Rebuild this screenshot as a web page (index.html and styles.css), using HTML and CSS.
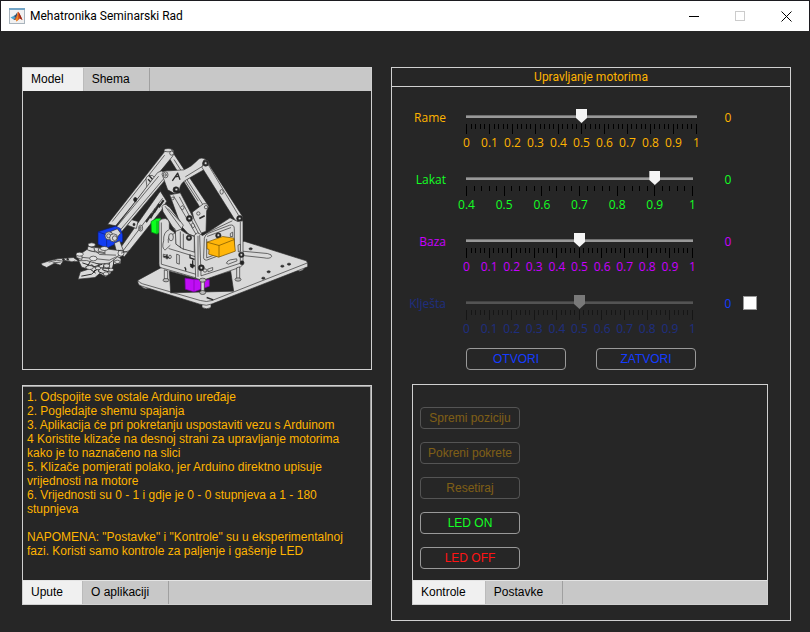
FILE: index.html
```html
<!DOCTYPE html>
<html lang="hr">
<head>
<meta charset="utf-8">
<title>Mehatronika Seminarski Rad</title>
<link rel="stylesheet" href="styles.css">
</head>
<body>
<header class="titlebar">
  <svg class="app-icon" viewBox="0 0 16 16" aria-hidden="true">
    <rect x=".5" y=".5" width="15" height="15" fill="#f1f1f1" stroke="#a9b4bd"/>
    <path d="M0 0H16V2H0Z" fill="#73a5c7"/>
    <path d="M1.5 9.5 4.5 8 6.5 9.5 4.5 11.5Z" fill="#4aa5cf"/>
    <path d="M4.5 8Q7 7 8.5 4L7.5 10 5.5 12 4.5 11.5 6.5 9.5Z" fill="#31506d"/>
    <path d="M9 3.5Q10.500 5 13.500 12L11 10.500 7.500 13.500Q7 11 5.500 12 8 9 9 3.500Z" fill="#d9541e"/>
    <path d="M9 3.500Q9.500 7 8.500 12L7.500 13.500 7 11.500Q9 8 9 3.500Z" fill="#f4a12a"/>
    <path d="M9.500 4Q11 6 13.500 12L11 10.500Z" fill="#932519"/>
  </svg>
  <h1 class="title">Mehatronika Seminarski Rad</h1>
  <button class="win-btn" aria-label="Smanji"><svg viewBox="0 0 11 11"><path d="M0 5.5H10"/></svg></button>
  <button class="win-btn win-off" aria-label="Povećaj" disabled><svg viewBox="0 0 11 11"><path d="M.5 .5H9.500V9.500H.5Z"/></svg></button>
  <button class="win-btn" aria-label="Zatvori"><svg viewBox="0 0 11 11"><path class="smooth" d="M.5 .5 10.500 10.500M10.500 .5 .5 10.500"/></svg></button>
</header>

<main class="workspace">
  <div class="left">
    <section class="panel model">
      <div class="tabs" role="tablist">
        <button class="tab active" role="tab" aria-selected="true">Model</button>
        <button class="tab" role="tab">Shema</button>
      </div>
      <svg class="robot" viewBox="-321 -144 1044 831" role="img" aria-label="Robotska ruka">
        <g stroke="#2c2c2c" stroke-width="2" stroke-linejoin="round" fill="#d9d9d9">
          <!-- base plate and feet -->
          <path d="M34 432V442Q45 452 60 446V436ZM216 490V504Q230 512 243 504V488ZM502 385V394Q514 398 523 388V380Z"/>
          <path d="M24 422 90 386 342 305 529 364Q535 369 533 382L247 493Q230 501 209 494L29 438Q21 431 24 422Z"/>
          <path d="M25 424Q28 430 38 433L211 483Q230 489 246 483L533 370" fill="none"/>
          <path d="M326 334 412 342Q427 345 425 351 420 359 402 355L320 346Z"/>
          <g fill="#333"><ellipse cx="362" cy="328" rx="5" ry="3"/><ellipse cx="416" cy="397" rx="5" ry="3"/><ellipse cx="457" cy="380" rx="5" ry="3"/><ellipse cx="477" cy="374" rx="5" ry="3"/><ellipse cx="400" cy="416" rx="5" ry="3"/></g>
          <path d="M118 395 208 420 302 395 311 455 122 460Z" fill="#242424"/>
          <path d="M165 416 193 420 238 421V440L192 457 166 449Z" fill="#bf0df5" stroke="#8200b0"/>
          <path d="M192 420V457" fill="none" stroke="#8200b0"/>
          <path d="M230 474 250 481" stroke-width="4"/>

          <!-- rear arm -->
          <path d="M104 34Q111 24 123 28 134 33 132 44L232 194Q237 201 232 209L217 215Z"/>
          <path d="M132 60 219 196M151 102 205 185" fill="none"/>
          <ellipse cx="172" cy="112" rx="5" ry="7"/>
          <path d="M187 218 220 193Q232 190 236 201L230 214 228 275 202 286Z"/>
          <circle cx="228" cy="203" r="5"/><circle cx="205" cy="222" r="5"/>
          <path d="M208 237 224 229" stroke-width="5"/>

          <!-- upper forearm link -->
          <path d="M108 31Q118 23 130 34 135 42 128 50L-43 259-67 254Z"/>
          <path d="M104 47-53 246M120 62 35 165" fill="none"/>
          <circle cx="125" cy="41" r="6"/><ellipse cx="114" cy="32" rx="12" ry="5"/>
          <path d="M48 119Q50 105 67 108L84 121 73 156 51 144Z"/>
          <path d="M54 119 79 143M57 108 76 129M69 144 98 182M78 137 109 173M86 123 69 182M100 120 82 171" fill="none" stroke-width="4"/>
          <ellipse cx="16" cy="180" rx="5" ry="6" fill="#222"/>

          <!-- lower forearm link -->
          <path d="M91 155 110 185 94 213-17 352-37 337Z"/>
          <path d="M98 176-24 338M83 207 49 243" fill="none"/>
          <path d="M48 248 66 222M61 236 77 208M72 220 88 193M86 204 101 182" stroke-width="6" fill="none"/>
          <ellipse cx="32" cy="266" rx="6" ry="9"/><ellipse cx="31" cy="266" rx="2" ry="5"/>
          <path d="M3 240 24 246 19 267-8 257Z"/><ellipse cx="12" cy="255" rx="3" ry="4" fill="#222"/>

          <!-- main forearm plate -->
          <path d="M83 99Q94 90 106 99 115 110 105 122L-42 297Q-57 299-56 281Z"/>
          <path d="M86 110-50 274M100 119-43 288" fill="none"/>
          <ellipse cx="16" cy="181" rx="4" ry="6" fill="#222"/>

          <!-- green motor -->
          <path d="M63 246 79 237 92 236V277L81 284 64 278Z" fill="#0aff1e" stroke="#067713"/>
          <path d="M81 244V283" fill="none" stroke="#067713"/>

          <!-- elbow bracket -->
          <path d="M96 104Q99 92 115 94L162 91Q185 82 207 58 219 51 233 65 240 76 230 86L169 121Q150 131 148 153L135 163 113 151Z"/>
          <path d="M127 124 143 101 150 121M136 112 147 110" fill="none" stroke-width="4"/>
          <path d="M166 112 218 80" fill="none"/>
          <ellipse cx="107" cy="106" rx="7" ry="9"/><ellipse cx="107" cy="106" rx="2" ry="4"/>
          <circle cx="138" cy="151" r="9" fill="#222"/><circle cx="139" cy="150" r="4"/>

          <!-- right rear rod -->
          <path d="M222 61Q238 60 238 77L337 230Q342 240 329 246 318 249 311 235L216 84Z"/>
          <path d="M233 73 326 228" fill="none"/>
          <circle cx="227" cy="71" r="9" fill="#292929"/><circle cx="227" cy="71" r="4"/>
          <ellipse cx="275" cy="157" rx="5" ry="7"/><circle cx="329" cy="237" r="9" fill="#222"/><circle cx="329" cy="237" r="4"/>

          <!-- main lifting arm -->
          <path d="M119 166 151 160 215 283 194 304 153 259Z"/>
          <path d="M130 168 199 286M148 172 208 286" fill="none"/>
          <path d="M151 204 157 198 163 205 157 212ZM183 255 189 250 195 260 188 266Z"/>
          <circle cx="178" cy="237" r="9" fill="#222"/><circle cx="178" cy="237" r="4"/>
          <circle cx="128" cy="177" r="4"/>
          <path d="M96 201Q103 187 119 203L160 257 151 276 136 275 99 217Z"/>
          <path d="M105 200 155 268M114 207 151 247" fill="none"/>
          <path d="M112 196 129 205" stroke-width="6"/>

          <!-- front box plates -->
          <path d="M87 246Q92 236 106 237 118 240 118 251V268L138 282V314L158 327 201 337V416L91 384Q86 379 87 370Z"/>
          <path d="M136 276 151 270 166 280 193 290 201 300V340L158 328 138 314Z"/>
          <path d="M94 249V374L200 405M116 327 201 353M118 270Q99 278 101 304 94 325 105 332L121 317M121 263Q142 263 134 282 111 286 115 310" fill="none"/>
          <ellipse cx="123" cy="293" rx="7" ry="11"/><path d="M140 344 148 347V374L140 371ZM100 344 109 347V356L100 353Z"/>
          <path d="M101 350 120 356M111 344V359M180 345V355L194 360M188 362V386M180 374 195 380" stroke-width="4" fill="none"/>
          <ellipse cx="120" cy="352" rx="4" ry="5"/><path d="M164 383 168 390M167 387V394" stroke-width="4"/>
          <path d="M151 276V326M160 283V330M167 281 193 291V338" fill="none"/>
          <circle cx="177" cy="295" r="8" fill="#222"/><circle cx="177" cy="295" r="4"/>
          <path d="M193 287 203 280 218 288 300 235 323 246 339 244V366Q340 378 331 383L217 423 197 416Z"/>
          <path d="M204 289V412M209 287 213 409 335 370M216 287 307 244M331 247V367" fill="none"/>
          <path d="M223 296Q225 285 236 281L299 257Q313 254 313 268V331L230 362Q219 362 221 350Z"/>
          <path d="M230 298V355L306 327M231 291 303 264" fill="none"/>
          <path d="M301 291V282L308 278V291ZM324 317 331 314V334L325 337ZM289 371Q292 363 301 361L320 358 321 364 295 374ZM233 389 248 384V392L234 397Z"/>
          <circle cx="265" cy="288" r="8" fill="#222"/><circle cx="265" cy="287" r="4"/>
          <g fill="#222"><circle cx="214" cy="385" r="9"/><circle cx="334" cy="346" r="8"/><circle cx="336" cy="370" r="6"/><circle cx="186" cy="379" r="5"/></g>
          <g><circle cx="214" cy="385" r="4"/><circle cx="334" cy="346" r="4"/><circle cx="225" cy="393" r="5"/></g>

          <!-- orange motor -->
          <path d="M231 308 278 291 312 296 316 335 266 353 236 344 237 330 231 328Z" fill="#ffb60a" stroke="#6d4b00"/>
          <path d="M231 308 267 318 313 300M267 318V353" fill="none" stroke="#6d4b00"/>
          <!-- standoffs -->
          <path d="M103 391V420H113V394ZM213 423V457H223V421ZM320 385V419H329V382Z"/>
          <g fill="#bbb"><ellipse cx="108" cy="422" rx="9" ry="5"/><ellipse cx="218" cy="459" rx="9" ry="6"/><ellipse cx="324" cy="420" rx="9" ry="5"/><ellipse cx="218" cy="422" rx="10" ry="6"/></g>

          <!-- blue motor and wrist -->
          <path d="M-96 277-73 269-43 260-29 267-22 286V307L-47 315-70 326-96 314Z" fill="#123df2" stroke="#0a1d77"/>
          <path d="M-96 277-70 286-43 275M-70 286V324" fill="none" stroke="#0a1d77"/>
          <path d="M-58 276-38 268-28 281-44 300Z"/>
          <circle cx="-63" cy="289" r="12"/><circle cx="-64" cy="289" r="6"/><circle cx="-49" cy="295" r="12"/><circle cx="-46" cy="296" r="7"/>
          <path d="M-47 311-31 304-20 333-39 343Z"/>
          <path d="M-159 351-118 322-27 334-23 348-62 378-151 364Z"/>
          <path d="M-158 352-62 362-26 345M-118 322-91 345-42 347M-124 333-73 343" fill="none"/>
          <path d="M-126 320-107 326V337L-128 331ZM-93 325-75 331V340L-96 335ZM-161 345-144 350V360L-161 354Z"/>
          <g fill="#e4e4e4"><ellipse cx="-115" cy="316" rx="11" ry="6"/><ellipse cx="-77" cy="327" rx="12" ry="6"/><ellipse cx="-151" cy="344" rx="11" ry="6"/><ellipse cx="-110" cy="357" rx="11" ry="7"/><circle cx="-27" cy="341" r="9"/></g>
          <path d="M-36 332-8 338-2 344-14 355M-27 341 0 333" fill="none"/>

          <!-- gripper jaws -->
          <path d="M-267 372-239 363-218 358-170 354-153 366-177 367-199 363-209 377-226 371-250 384-263 378Z"/>
          <path d="M-244 368-220 362-201 365M-232 370-208 368M-201 355-194 364-179 365M-166 363-175 373" fill="none"/>
          <path d="M-203 359-197 362M-190 357-184 361" stroke-width="6"/>
          <path d="M-154 364-130 363-94 374-62 371-37 352-27 358-28 372-50 376-58 401-73 412-91 402-105 414-156 419-149 397-124 389-145 383Z"/>
          <path d="M-146 410-115 404-99 389-114 376-134 383M-119 366-129 382-103 401M-93 374-94 397-75 404M-77 372-82 391-61 398M-62 369-63 387M-48 360-50 378-33 370M-143 370-108 382-83 374M-108 394-88 385-61 387" fill="none" stroke-width="3"/>
          <g><ellipse cx="-121" cy="384" rx="11" ry="6"/><ellipse cx="-96" cy="386" rx="8" ry="5"/><ellipse cx="-70" cy="379" rx="9" ry="6"/><ellipse cx="-72" cy="403" rx="8" ry="6"/><ellipse cx="-57" cy="391" rx="8" ry="5"/><ellipse cx="-38" cy="367" rx="8" ry="5"/></g>
        </g>
      </svg>
    </section>

    <section class="panel notes">
      <textarea class="instructions" aria-label="Upute" readonly>1. Odspojite sve ostale Arduino uređaje
2. Pogledajte shemu spajanja
3. Aplikacija će pri pokretanju uspostaviti vezu s Arduinom
4 Koristite klizaće na desnoj strani za upravljanje motorima kako je to naznačeno na slici
5. Klizače pomjerati polako, jer Arduino direktno upisuje vrijednosti na motore
6. Vrijednosti su 0 - 1 i gdje je 0 - 0 stupnjeva a 1 - 180 stupnjeva

NAPOMENA: "Postavke" i "Kontrole" su u eksperimentalnoj fazi. Koristi samo kontrole za paljenje i gašenje LED</textarea>
      <div class="tabs tabs-bottom" role="tablist">
        <button class="tab active" role="tab" aria-selected="true">Upute</button>
        <button class="tab" role="tab">O aplikaciji</button>
      </div>
    </section>
  </div>

  <section class="panel motors">
    <h2 class="group-title">Upravljanje motorima</h2>
    <div class="motor amber">
      <label for="rame">Rame</label>
      <div class="slider">
        <input id="rame" type="range" min="0" max="1" step="0.01" value="0.5">
      </div>
      <output for="rame">0</output>
    </div>
    <div class="motor green short">
      <label for="lakat">Lakat</label>
      <div class="slider">
        <input id="lakat" type="range" min="0.4" max="1" step="0.01" value="0.9">
      </div>
      <output for="lakat">0</output>
    </div>
    <div class="motor violet short">
      <label for="baza">Baza</label>
      <div class="slider">
        <input id="baza" type="range" min="0" max="1" step="0.01" value="0.5">
      </div>
      <output for="baza">0</output>
    </div>
    <div class="motor blue short off">
      <label for="kljesta">Klješta</label>
      <div class="slider">
        <input id="kljesta" type="range" min="0" max="1" step="0.01" value="0.5" disabled>
      </div>
      <output for="kljesta">0</output>
      <input class="check" type="checkbox" aria-label="Omogući klješta">
    </div>
    <div class="grip">
      <button class="btn blue">OTVORI</button>
      <button class="btn blue">ZATVORI</button>
    </div>
    <div class="panel controls">
      <div class="stack">
        <button class="btn amber" disabled>Spremi poziciju</button>
        <button class="btn amber" disabled>Pokreni pokrete</button>
        <button class="btn amber" disabled>Resetiraj</button>
        <button class="btn green">LED ON</button>
        <button class="btn red">LED OFF</button>
      </div>
      <div class="tabs tabs-bottom" role="tablist">
        <button class="tab active" role="tab" aria-selected="true">Kontrole</button>
        <button class="tab" role="tab">Postavke</button>
      </div>
    </div>
  </section>
</main>
<script src="scale.js"></script>
</body>
</html>
```
FILE: styles.css
```css
* { box-sizing: border-box; }

body {
  margin: 0;
  min-height: 100vh;
  display: flex;
  flex-direction: column;
  background: #262626;
  color: #000;
  font: 12px/14px "Liberation Sans", Arial, sans-serif;
}

button, textarea { font: inherit; }

.amber { color: #ffb400; }
.green { color: #14ff24; }
.violet { color: #c800ff; }
.blue { color: #143cff; }
.red { color: #ff1414; }

/* title bar */
.titlebar {
  display: flex;
  align-items: center;
  height: 31px;
  padding-left: 8px;
  background: #fff;
  border: 1px solid #1c1b20;
  border-bottom: 0;
}
.app-icon { width: 16px; height: 16px; }
.title {
  flex: 1;
  margin: 0 0 0 5px;
  font: 12px/16px Roboto, "Segoe UI", sans-serif;
}
.win-btn {
  display: grid;
  place-items: center;
  width: 46px;
  height: 30px;
  padding: 0;
  border: 0;
  background: none;
}
.win-btn svg {
  width: 11px;
  height: 11px;
  fill: none;
  stroke: #000;
  shape-rendering: crispEdges;
}
.win-btn .smooth { shape-rendering: auto; }
.win-off svg { stroke: #ccc; }

/* layout */
.workspace {
  flex: 1;
  display: grid;
  grid-template-columns: 350fr 400fr;
  gap: 19px;
  padding: 36px 19px 11px 22px;
}
.left {
  display: flex;
  flex-direction: column;
  gap: 15px;
  padding-bottom: 16px;
}
.panel {
  display: flex;
  flex-direction: column;
  border: 1px solid #d0d0d0;
}
.model { flex: 1; }
.robot { display: block; width: 100%; flex: 1; min-height: 0; }

/* tabs */
.tabs {
  display: flex;
  height: 23px;
  background: #c8c8c8;
}
.tabs-bottom { height: 24px; border-top: 1px solid #e4e4e4; }
.tab {
  padding: 0 19px 1px 8px;
  border: 0;
  border-right: 1px solid #a0a0a0;
  background: none;
  color: #000;
}
.tab.active { border-right-color: #bbb; background: #f0f0f0; }

.instructions {
  height: 194px;
  margin: 0;
  padding: 3px 4px 0;
  border: 0;
  border-top: 1px solid #999;
  border-right: 1px solid #999;
  outline: 0;
  resize: none;
  overflow: hidden;
  background: none;
  color: #ffb400;
}

/* motors */
.group-title {
  margin: 0;
  padding: 2px 0;
  border-bottom: 1px solid #d0d0d0;
  font: 12px/14px Roboto, "Segoe UI", sans-serif;
  text-align: center;
  color: #ffb400;
}
.group-title + .motor { margin-top: 22px; }
.motor {
  display: grid;
  grid-template-columns: 54px 1fr 30px 31px;
  column-gap: 16px;
  height: 62px;
  font: 12px/18px "Open Sans", "Segoe UI", sans-serif;
}
.motor label { text-align: right; }
.motor .slider { margin-left: 4px; }
.motor.short .slider { margin-right: 4px; }
.motor output { text-align: center; }
.motor .check {
  appearance: none;
  width: 14px;
  height: 14px;
  margin: 1px 0 0 -16px;
  border: 1px solid #999;
  background: #fff;
}
.slider input {
  appearance: none;
  display: block;
  width: calc(100% + 10px);
  height: 14px;
  margin: 0 -5px;
  background: linear-gradient(#707070 0 1px, #999 1px) center 6px / calc(100% - 10px) 3px no-repeat;
}
.slider input::-webkit-slider-thumb {
  appearance: none;
  width: 11px;
  height: 14px;
  background: #f5f5f5;
  clip-path: polygon(0 0, 100% 0, 100% 65%, 50% 100%, 0 65%);
}
.ticks {
  display: flex;
  justify-content: space-between;
  height: 10px;
  margin-top: 1px;
}
.ticks i { width: 1px; height: 5px; background: #000; }
.ticks .major { height: 10px; }
.numbers { display: flex; justify-content: space-between; }
.numbers span { display: flex; justify-content: center; width: 1px; }
.off label, .off .slider { opacity: .4; }

/* buttons */
.btn {
  width: 100px;
  height: 22px;
  padding: 0;
  border: 1px solid #999;
  border-radius: 4px;
  background: none;
}
.btn:disabled { opacity: .4; }
.grip {
  display: flex;
  gap: 30px;
  padding-left: 74px;
  margin-top: -9px;
}
.controls {
  flex: 1;
  margin: 14px 22px 15px 20px;
}
.stack {
  flex: 1;
  display: flex;
  flex-direction: column;
  gap: 13px;
  padding: 22px 7px 0;
}
```
FILE: scale.js
```js
// Adds tick marks every 0.02 and numbers every 0.1 below each slider.
document.querySelectorAll('.slider').forEach((slider) => {
  const input = slider.querySelector('input');
  const start = Math.round(input.min * 50);
  const end = Math.round(input.max * 50);
  const ticks = document.createElement('div');
  const numbers = document.createElement('div');
  ticks.className = 'ticks';
  numbers.className = 'numbers';
  for (let i = start; i <= end; i++) {
    const tick = document.createElement('i');
    ticks.append(tick);
    if (i % 5 === 0) {
      tick.className = 'major';
      const number = document.createElement('span');
      number.textContent = i / 50;
      numbers.append(number);
    }
  }
  slider.append(ticks, numbers);
});
```
